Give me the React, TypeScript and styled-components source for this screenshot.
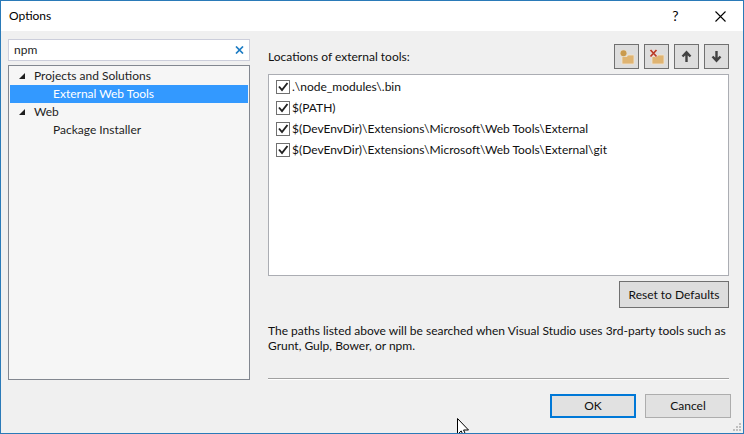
import React, { useState } from "react";
import styled, { createGlobalStyle } from "styled-components";

const GlobalStyle = createGlobalStyle`
  *, *::before, *::after { box-sizing: border-box; }
  body {
    margin: 0;
    background: #f0f0f0;
    color: #101010;
    font: 12px/16px Lato, "Open Sans", sans-serif;
  }
  button, input { font: inherit; color: inherit; }
`;

const Dialog = styled.main`
  position: relative;
  display: flex;
  flex-direction: column;
  min-height: 100vh;
  overflow: hidden;
  border: 1px solid #2a7ab8;
  background: #f0f0f0;
`;

const TitleBar = styled.header`
  display: flex;
  align-items: center;
  height: 30px;
  padding-left: 8px;
  background: #fff;
  color: #000;
`;

const Title = styled.h1`
  flex: 1;
  margin: 0;
  font-size: 12px;
  font-weight: 400;
`;

const CaptionButton = styled.button`
  display: grid;
  place-items: center;
  width: 45px;
  height: 28px;
  padding: 0;
  border: 0;
  background: transparent;
`;

const HelpButton = styled(CaptionButton)`
  font-size: 14px;
`;

const Body = styled.div`
  flex: 1;
  display: grid;
  grid-template-columns: 242px minmax(0, 1fr);
  column-gap: 18px;
  padding: 8px 14px 0 7px;
`;

const Sidebar = styled.nav`
  display: flex;
  flex-direction: column;
  gap: 4px;
`;

const SearchBox = styled.div`
  display: flex;
  align-items: center;
  height: 22px;
  padding: 0 4px 0 5px;
  border: 1px solid #cccedb;
  background: #fff;
`;

const SearchInput = styled.input`
  flex: 1;
  min-width: 0;
  padding: 0;
  border: 0;
  outline: 0;
  background: transparent;
  color: #1e1e1e;
`;

const ClearButton = styled.button`
  display: grid;
  place-items: center;
  width: 11px;
  height: 16px;
  padding: 0;
  border: 0;
  background: transparent;
`;

const Tree = styled.ul`
  flex: 1;
  margin: 0;
  padding: 1px;
  border: 1px solid #828790;
  background: #f6f6f6;
  color: #1e1e1e;
  list-style: none;
`;

const Branch = styled.ul`
  margin: 0;
  padding: 0;
  list-style: none;
`;

const TreeRow = styled.div<{ $selected?: boolean; $leaf?: boolean }>`
  display: flex;
  align-items: center;
  gap: 9px;
  height: 18px;
  padding-left: ${(p) => (p.$leaf ? 43 : 9)}px;
  background: ${(p) => (p.$selected ? "#3399ff" : "transparent")};
  color: ${(p) => (p.$selected ? "#fff" : "inherit")};
`;

const Page = styled.section`
  display: flex;
  flex-direction: column;
  padding-top: 5px;
`;

const PageHeader = styled.div`
  display: flex;
  align-items: center;
  gap: 5px;
  margin-bottom: 5px;
`;

const ListLabel = styled.h2`
  flex: 1;
  margin: 0;
  font-size: 12px;
  font-weight: 400;
`;

const ToolButton = styled.button`
  display: grid;
  place-items: center;
  width: 25px;
  height: 25px;
  padding: 0;
  border: 1px solid #707070;
  background: #dddddd;
`;

const PathList = styled.ul`
  flex: 1;
  margin: 0;
  padding: 1px 7px;
  border: 1px solid #abadb3;
  background: #fff;
  list-style: none;
`;

const PathLabel = styled.label`
  display: flex;
  align-items: center;
  gap: 2px;
  height: 21px;
`;

const CheckFrame = styled.span`
  display: grid;
  width: 14px;
  height: 14px;
`;

const CheckInput = styled.input`
  grid-area: 1 / 1;
  appearance: none;
  width: 14px;
  height: 14px;
  margin: 0;
  border: 1px solid #707070;
  background: #fff;

  & + svg { display: none; }
  &:checked + svg { display: block; }
`;

const CheckMark = styled.svg`
  grid-area: 1 / 1;
  pointer-events: none;
`;

const ResetButton = styled.button`
  align-self: flex-end;
  width: 110px;
  height: 27px;
  margin-top: 5px;
  padding: 0;
  border: 1px solid #707070;
  background: #dddddd;
`;

const Hint = styled.p`
  margin: 15px 0 25px;
  line-height: 15px;
`;

const Divider = styled.hr`
  width: 100%;
  margin: 0;
  border: 0;
  border-top: 1px solid #a0a0a0;
  border-bottom: 1px solid #fff;
`;

const Footer = styled.footer`
  display: flex;
  justify-content: flex-end;
  gap: 9px;
  padding: 14px 12px 15px;
`;

const FooterButton = styled.button<{ $primary?: boolean }>`
  width: 86px;
  height: 24px;
  padding: 0;
  border: ${(p) => (p.$primary ? "2px solid #0078d7" : "1px solid #adadad")};
  background: #e1e1e1;
`;

const ResizeGrip = styled.svg`
  position: absolute;
  right: 2px;
  bottom: 2px;
`;

const Pointer = styled.svg`
  position: absolute;
  left: 456px;
  bottom: -4px;
`;

const Expander = () => (
  <svg width="6" height="6" viewBox="0 0 6 6" aria-hidden="true">
    <path d="M6 0V6H0Z" fill="#1e1e1e" />
  </svg>
);

const CloseIcon = () => (
  <svg width="11" height="11" viewBox="0 0 11 11" aria-hidden="true">
    <path d="M.5 .5l10 10M10.500 .5l-10 10" stroke="#000" strokeWidth="1.1" />
  </svg>
);

const ClearIcon = () => (
  <svg width="9" height="8" viewBox="0 0 9 8" aria-hidden="true">
    <path d="M1 .5l7 7M8 .5l-7 7" stroke="#1c7cc4" strokeWidth="1.7" />
  </svg>
);

const NewFolderIcon = () => (
  <svg width="16" height="16" viewBox="0 0 16 16" aria-hidden="true">
    <path d="M3 7.500H8L9 6H15V15H3Z" fill="#dfb472" stroke="#f1e5d0" strokeWidth=".8" />
    <circle cx="4.500" cy="4.300" r="3.800" fill="#e6dccb" />
    <circle cx="4.500" cy="4.300" r="3" fill="#c99a4e" />
  </svg>
);

const DeleteFolderIcon = () => (
  <svg width="16" height="16" viewBox="0 0 16 16" aria-hidden="true">
    <path d="M3 7.500H8L9 6H15V15H3Z" fill="#dfb472" stroke="#f1e5d0" strokeWidth=".8" />
    <path d="M1.500 1l6 6.500M7.500 1l-6 6.500" stroke="#ecdcd4" strokeWidth="3.200" />
    <path d="M1.500 1l6 6.500M7.500 1l-6 6.500" stroke="#b93a26" strokeWidth="1.700" />
  </svg>
);

const ArrowIcon = ({ down }: { down?: boolean }) => (
  <svg width="15" height="15" viewBox="0 0 15 15" aria-hidden="true">
    <path
      d={down ? "M7.500 2V12M3.500 7.500l4 4.200 4-4.200" : "M7.500 13V3M3.500 7.500l4-4.200 4 4.200"}
      fill="none"
      stroke="#424242"
      strokeWidth="2.400"
    />
  </svg>
);

const sections = [
  { name: "Projects and Solutions", pages: ["External Web Tools"] },
  { name: "Web", pages: ["Package Installer"] },
];

const paths = [
  ".\\node_modules\\.bin",
  "$(PATH)",
  "$(DevEnvDir)\\Extensions\\Microsoft\\Web Tools\\External",
  "$(DevEnvDir)\\Extensions\\Microsoft\\Web Tools\\External\\git",
];

const gripDots = [
  [6, 0], [3, 3], [6, 3], [0, 6], [3, 6], [6, 6],
];

export default function App() {
  const [query, setQuery] = useState("npm");

  return (
    <>
      <GlobalStyle />
      <Dialog>
        <TitleBar>
          <Title>Options</Title>
          <HelpButton aria-label="Help">?</HelpButton>
          <CaptionButton aria-label="Close"><CloseIcon /></CaptionButton>
        </TitleBar>
        <Body>
          <Sidebar>
            <SearchBox>
              <SearchInput
                aria-label="Search options"
                value={query}
                onChange={(e) => setQuery(e.target.value)}
              />
              <ClearButton aria-label="Clear search" onClick={() => setQuery("")}>
                <ClearIcon />
              </ClearButton>
            </SearchBox>
            <Tree>
              {sections.map((section) => (
                <li key={section.name}>
                  <TreeRow><Expander />{section.name}</TreeRow>
                  <Branch>
                    {section.pages.map((page) => (
                      <li key={page}>
                        <TreeRow $leaf $selected={page === "External Web Tools"}>{page}</TreeRow>
                      </li>
                    ))}
                  </Branch>
                </li>
              ))}
            </Tree>
          </Sidebar>
          <Page>
            <PageHeader>
              <ListLabel>Locations of external tools:</ListLabel>
              <ToolButton aria-label="Add"><NewFolderIcon /></ToolButton>
              <ToolButton aria-label="Remove"><DeleteFolderIcon /></ToolButton>
              <ToolButton aria-label="Move up"><ArrowIcon /></ToolButton>
              <ToolButton aria-label="Move down"><ArrowIcon down /></ToolButton>
            </PageHeader>
            <PathList>
              {paths.map((path) => (
                <li key={path}>
                  <PathLabel>
                    <CheckFrame>
                      <CheckInput type="checkbox" defaultChecked />
                      <CheckMark width="14" height="14" viewBox="0 0 14 14">
                        <path d="M3 6.500l3 3.500 5.500-7" fill="none" stroke="#212121" strokeWidth="1.900" />
                      </CheckMark>
                    </CheckFrame>
                    {path}
                  </PathLabel>
                </li>
              ))}
            </PathList>
            <ResetButton>Reset to Defaults</ResetButton>
            <Hint>
              The paths listed above will be searched when Visual Studio uses 3rd-party tools such as
              Grunt, Gulp, Bower, or npm.
            </Hint>
            <Divider />
          </Page>
        </Body>
        <Footer>
          <FooterButton $primary>OK</FooterButton>
          <FooterButton>Cancel</FooterButton>
        </Footer>
        <ResizeGrip width="8" height="8" viewBox="0 0 8 8" aria-hidden="true">
          {gripDots.map(([x, y]) => (
            <rect key={`${x}-${y}`} x={x} y={y} width="2" height="2" fill="#bfbfbf" />
          ))}
        </ResizeGrip>
        <Pointer width="12" height="19" viewBox="0 0 12 19" aria-hidden="true">
          <path d="M.5 .5V16.500L4.200 12.900L6.600 18.300L8.900 17.300L6.600 12H11.500Z" fill="#fff" stroke="#000" />
        </Pointer>
      </Dialog>
    </>
  );
}
